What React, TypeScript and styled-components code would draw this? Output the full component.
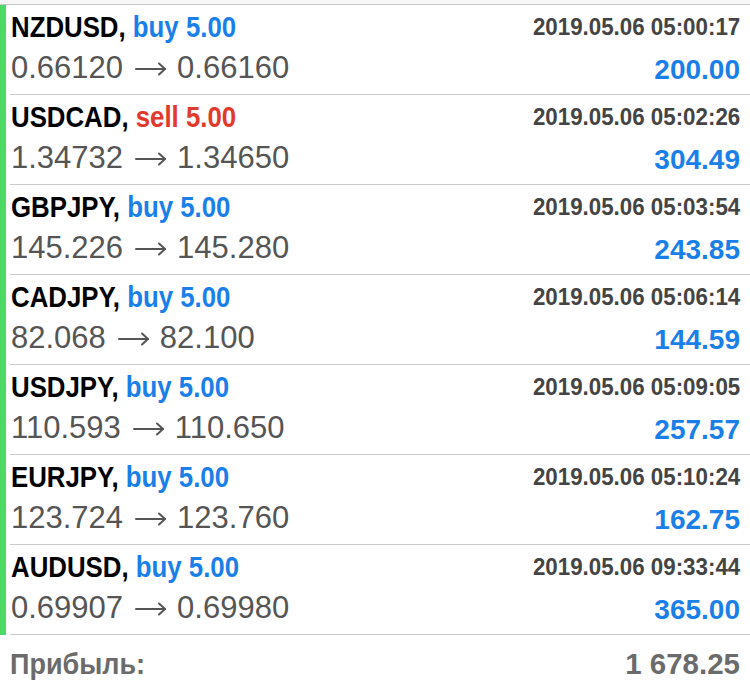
import React from 'react'
import styled, { createGlobalStyle } from 'styled-components'

const GlobalStyle = createGlobalStyle`
  html, body {
    margin: 0;
    padding: 0;
    background: #fff;
  }
  body {
    font-family: "Liberation Sans", Arial, sans-serif;
    -webkit-font-smoothing: antialiased;
  }
`

const Page = styled.div`
  width: 750px;
  height: 696px;
  overflow: hidden;
  background: #fff;
`

const TopStrip = styled.div`
  height: 4px;
  background: #f6f6f6;
  border-bottom: 1px solid #c9c9c9;
`

const List = styled.div`
  border-left: 6px solid #4cd964;
  padding-left: 4px;
`

const Row = styled.div`
  display: grid;
  grid-template-columns: 1fr auto;
  grid-template-rows: 42px 40px;
  padding: 1px 10px 6px 1px;
  border-bottom: 1px solid #c9c9c9;
`

// the app uses a condensed bold face, squeeze the bold lines a bit
const Title = styled.div`
  font-size: 30px;
  line-height: 42px;
  font-weight: 700;
  color: #000;
  white-space: nowrap;
  transform: scaleX(0.86);
  transform-origin: left center;
`

const Side = styled.span<{ $sell?: boolean }>`
  color: ${p => (p.$sell ? '#e2392d' : '#1a7fe8')};
`

const Time = styled.div`
  font-size: 23.5px;
  line-height: 42px;
  font-weight: 700;
  color: #444;
  text-align: right;
  white-space: nowrap;
  transform: scaleX(0.95);
  transform-origin: right center;
`

const Prices = styled.div`
  display: flex;
  align-items: center;
  font-size: 31px;
  line-height: 40px;
  color: #555;
  white-space: nowrap;
`

const Arrow = styled.svg`
  display: block;
  width: 31px;
  height: 14px;
  margin: 2px 11px 0 12px;
  overflow: visible;
`

const Profit = styled.div`
  font-size: 28px;
  line-height: 44px;
  font-weight: 700;
  color: #1a7fe8;
  text-align: right;
`

const Footer = styled.div`
  display: flex;
  justify-content: space-between;
  align-items: center;
  height: 58px;
  padding: 0 10px;
  font-weight: 700;
  color: #6b6b6b;
`

const FooterLabel = styled.span`
  font-size: 30px;
  transform: scaleX(0.9);
  transform-origin: left center;
`

const FooterValue = styled.span`
  font-size: 29.5px;
`

type Deal = {
  symbol: string
  side: 'buy' | 'sell'
  volume: string
  open: string
  close: string
  time: string
  profit: string
}

const deals: Deal[] = [
  { symbol: 'NZDUSD', side: 'buy', volume: '5.00', open: '0.66120', close: '0.66160', time: '2019.05.06 05:00:17', profit: '200.00' },
  { symbol: 'USDCAD', side: 'sell', volume: '5.00', open: '1.34732', close: '1.34650', time: '2019.05.06 05:02:26', profit: '304.49' },
  { symbol: 'GBPJPY', side: 'buy', volume: '5.00', open: '145.226', close: '145.280', time: '2019.05.06 05:03:54', profit: '243.85' },
  { symbol: 'CADJPY', side: 'buy', volume: '5.00', open: '82.068', close: '82.100', time: '2019.05.06 05:06:14', profit: '144.59' },
  { symbol: 'USDJPY', side: 'buy', volume: '5.00', open: '110.593', close: '110.650', time: '2019.05.06 05:09:05', profit: '257.57' },
  { symbol: 'EURJPY', side: 'buy', volume: '5.00', open: '123.724', close: '123.760', time: '2019.05.06 05:10:24', profit: '162.75' },
  { symbol: 'AUDUSD', side: 'buy', volume: '5.00', open: '0.69907', close: '0.69980', time: '2019.05.06 09:33:44', profit: '365.00' },
]

const RightArrow = () => (
  <Arrow viewBox="0 0 31 14" fill="none" stroke="#555" strokeWidth={2} strokeLinecap="round" strokeLinejoin="round">
    <path d="M1 7H30" />
    <path d="M24 1.5L30 7L24 12.5" />
  </Arrow>
)

const DealRow = ({ deal }: { deal: Deal }) => (
  <Row>
    <Title>
      {deal.symbol},{' '}
      <Side $sell={deal.side === 'sell'}>
        {deal.side} {deal.volume}
      </Side>
    </Title>
    <Time>{deal.time}</Time>
    <Prices>
      <span>{deal.open}</span>
      <RightArrow />
      <span>{deal.close}</span>
    </Prices>
    <Profit>{deal.profit}</Profit>
  </Row>
)

const App = () => {
  return (
    <Page>
      <GlobalStyle />
      <TopStrip />
      <List>
        {deals.map(d => (
          <DealRow key={d.symbol + d.time} deal={d} />
        ))}
      </List>
      <Footer>
        <FooterLabel>Прибыль:</FooterLabel>
        <FooterValue>1 678.25</FooterValue>
      </Footer>
    </Page>
  )
}

export default App
